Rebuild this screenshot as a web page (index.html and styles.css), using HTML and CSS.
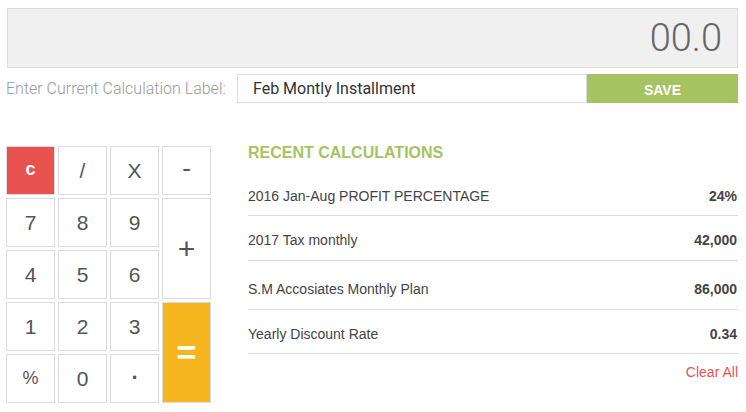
FILE: index.html
```html
<!DOCTYPE html>
<html>
<head>
<meta charset="utf-8">
<link rel="stylesheet" href="styles.css">
</head>
<body>
<div class="app">
  <div class="display">00.0</div>
  <div class="label-row">
    <span class="label-text">Enter Current Calculation Label:</span>
    <input class="label-input" type="text" value="Feb Montly Installment">
    <button class="save-btn">SAVE</button>
  </div>
  <div class="main">
    <div class="keypad">
      <button class="key key-clear">c</button>
      <button class="key">/</button>
      <button class="key">X</button>
      <button class="key key-minus">-</button>
      <button class="key">7</button>
      <button class="key">8</button>
      <button class="key">9</button>
      <button class="key key-plus">+</button>
      <button class="key">4</button>
      <button class="key">5</button>
      <button class="key">6</button>
      <button class="key">1</button>
      <button class="key">2</button>
      <button class="key">3</button>
      <button class="key key-equals">=</button>
      <button class="key key-small">%</button>
      <button class="key">0</button>
      <button class="key key-dot">.</button>
    </div>
    <div class="recent">
      <h2 class="recent-title">RECENT CALCULATIONS</h2>
      <ul class="recent-list">
        <li class="recent-row"><span>2016 Jan-Aug PROFIT PERCENTAGE</span><b>24%</b></li>
        <li class="recent-row"><span>2017 Tax monthly</span><b>42,000</b></li>
        <li class="recent-row recent-row-tall"><span>S.M Accosiates Monthly Plan</span><b>86,000</b></li>
        <li class="recent-row"><span>Yearly Discount Rate</span><b>0.34</b></li>
      </ul>
      <div class="clear-wrap"><a class="clear-all">Clear All</a></div>
    </div>
  </div>
</div>
</body>
</html>
```
FILE: styles.css
```css
* { box-sizing: border-box; }
html, body { margin: 0; padding: 0; background: #fff; }
body { font-family: "Liberation Sans", Arial, sans-serif; width: 746px; height: 412px; overflow: hidden; }
.app { padding: 8px 8px 0 7px; }
.display {
  height: 60px;
  background: #f0f0f0;
  border: 1px solid #dcdcdc;
  font-family: Roboto, sans-serif;
  font-weight: 300;
  font-size: 38px;
  color: #666;
  text-align: right;
  padding: 8px 15px 0 0;
  line-height: 42px;
}
.label-row {
  display: flex;
  align-items: stretch;
  margin-top: 6px;
  margin-left: -1px;
  height: 29px;
}
.label-text {
  font-family: Roboto, sans-serif;
  font-weight: 300;
  font-size: 16px;
  color: #9a9a9a;
  line-height: 29px;
  width: 231px;
  white-space: nowrap;
}
.label-input {
  width: 350px;
  height: 29px;
  border: 1px solid #dcdcdc;
  margin: 0;
  padding: 0 0 0 15px;
  font-family: Roboto, sans-serif;
  font-size: 16px;
  color: #333;
  outline: none;
}
.save-btn {
  width: 151px;
  height: 29px;
  border: 0;
  margin: 0;
  background: #a6c363;
  color: #fff;
  font-family: "Liberation Sans", Arial, sans-serif;
  font-weight: bold;
  font-size: 14px;
  padding: 2px 0 0;
}
.main {
  display: flex;
  margin-top: 43px;
}
.keypad {
  display: grid;
  grid-template-columns: repeat(4, 49px);
  grid-template-rows: repeat(5, 49px);
  gap: 3px;
  margin-left: -1px;
}
.key {
  border: 1px solid #dcdcdc;
  background: #fff;
  margin: 0;
  padding: 0;
  font-family: "Liberation Sans", Arial, sans-serif;
  font-size: 21px;
  color: #555;
}
.key-clear { background: #e9534f; color: #fff; font-weight: bold; font-size: 18px; padding-bottom: 3px; }
.key-minus { font-size: 26px; padding-bottom: 4px; }
.key-plus { grid-column: 4; grid-row: 2 / span 2; font-size: 30px; }
.key-equals { grid-column: 4; grid-row: 4 / span 2; background: #f4b51f; color: #fff; font-size: 34px; font-weight: bold; }
.key-small { font-size: 18px; }
.key-dot { font-weight: bold; font-size: 22px; padding-bottom: 14px; }
.recent {
  flex: 1;
  margin-left: 37px;
  margin-top: -2px;
}
.recent-title {
  margin: 0;
  font-size: 16px;
  font-weight: bold;
  color: #a6c363;
  line-height: 18px;
}
.recent-list {
  list-style: none;
  margin: 14px 0 0;
  padding: 0;
}
.recent-row {
  display: flex;
  justify-content: space-between;
  align-items: center;
  height: 45px;
  border-bottom: 1px solid #dcdcdc;
  font-size: 14px;
  color: #444;
  padding: 4px 1px 0 0;
}
.recent-row:first-child { height: 40px; padding: 0 1px 0 0; }
.recent-row-tall { height: 49px; padding-top: 8px; }
.recent-row:last-child { height: 44px; }
.recent-row b { font-weight: bold; color: #444; }
.clear-wrap { text-align: right; margin-top: 9px; }
.clear-all { color: #e9534f; font-size: 14px; }
```
